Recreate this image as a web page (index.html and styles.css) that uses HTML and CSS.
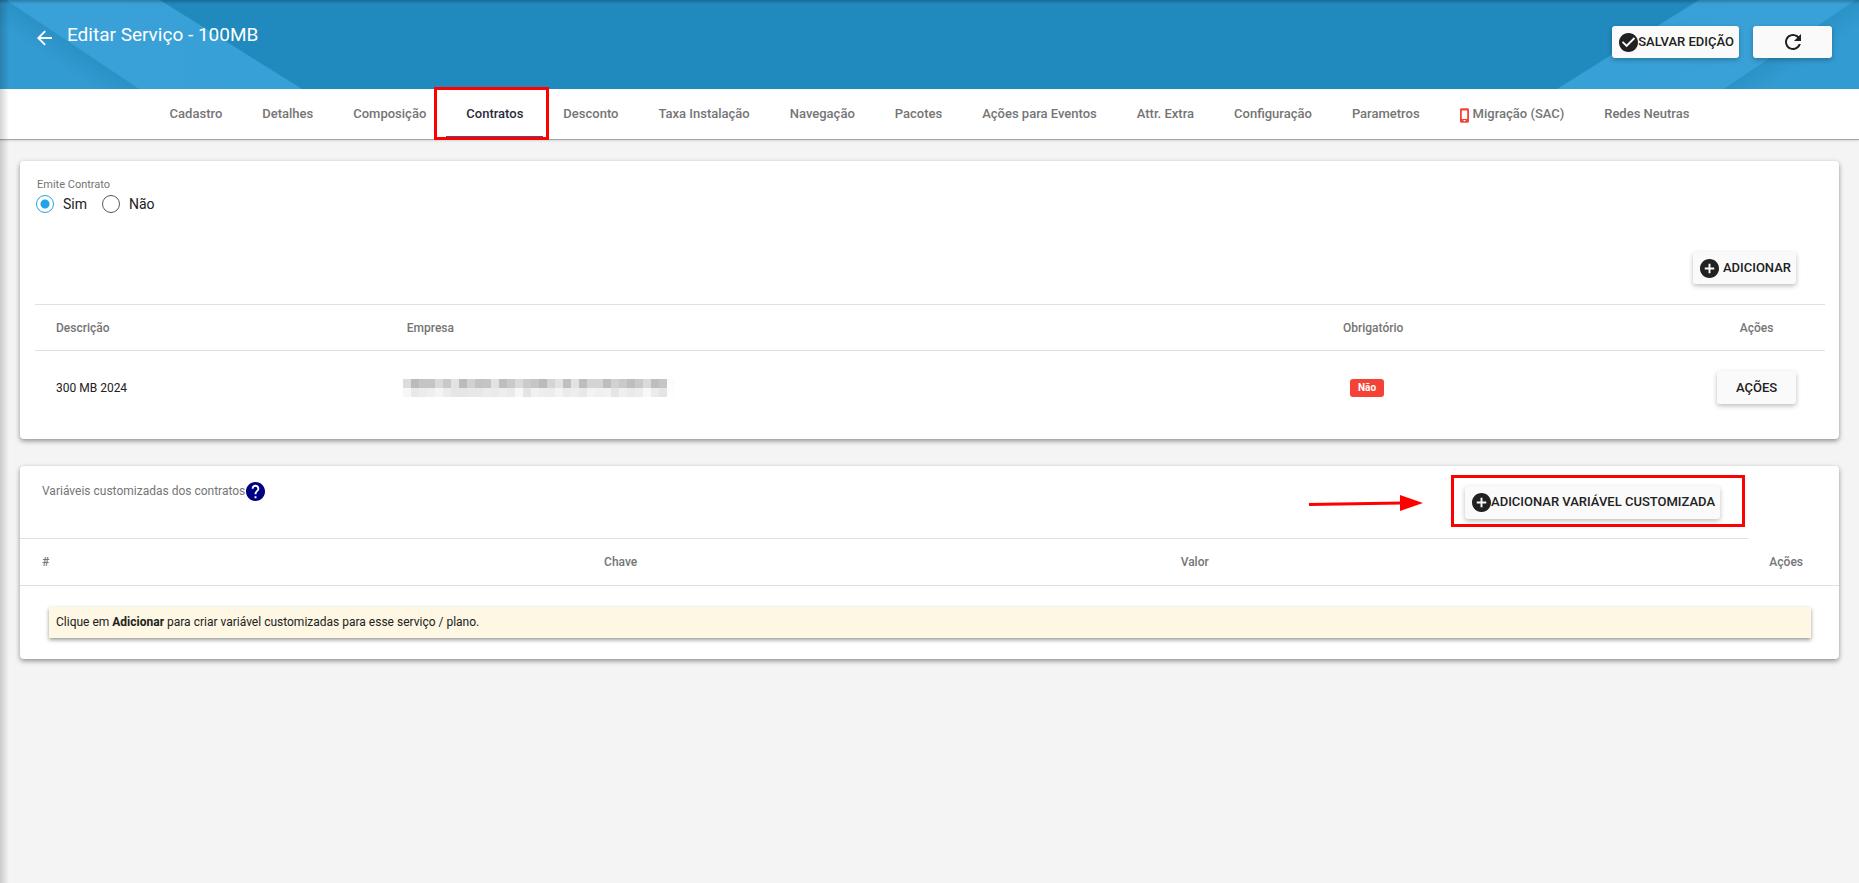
FILE: index.html
```html
<!DOCTYPE html>
<html lang="pt-BR">
<head>
<meta charset="utf-8">
<title>Editar Serviço - 100MB</title>
<link rel="stylesheet" href="styles.css">
</head>
<body>
<svg class="sprite" aria-hidden="true">
  <symbol id="plus" viewBox="2 2 20 20"><path d="M12 2C6.48 2 2 6.48 2 12s4.480 10 10 10 10-4.480 10-10S17.520 2 12 2zm5 11h-4v4h-2v-4H7v-2h4V7h2v4h4v2z"/></symbol>
</svg>
<header class="topbar">
  <svg class="topbar-art left" viewBox="0 0 302 89" aria-hidden="true">
    <defs>
      <linearGradient id="low" gradientUnits="userSpaceOnUse" x1="30" y1="80" x2="73" y2="16"><stop offset="0.35" stop-color="#329bd1"/><stop offset="1" stop-color="#2489bd"/></linearGradient>
      <linearGradient id="band" gradientUnits="userSpaceOnUse" x1="120" y1="0" x2="240" y2="0"><stop offset="0" stop-color="#39a1d7"/><stop offset="1" stop-color="#37a0d6"/></linearGradient>
    </defs>
    <path fill="url(#low)" d="M0 0H6L139 89H0z"/>
    <path fill="url(#band)" d="M6 0H160L302 89H139z"/>
  </svg>
  <svg class="topbar-art right" viewBox="0 0 302 89" aria-hidden="true">
    <g transform="matrix(-1 0 0 1 302 0)">
      <path fill="url(#low)" d="M0 0H3L135 89H0z"/>
      <path fill="url(#band)" d="M3 0H160L302 89H135z"/>
    </g>
  </svg>
  <button class="back" aria-label="Voltar"><svg viewBox="4 4 16 16"><path d="M20 11H7.830l5.590-5.590L12 4l-8 8 8 8 1.410-1.410L7.830 13H20v-2z"/></svg></button>
  <h1>Editar Serviço - 100MB</h1>
  <div class="topbar-actions">
    <button class="btn"><svg class="icon" viewBox="2 2 20 20"><path d="M12 2C6.480 2 2 6.480 2 12s4.480 10 10 10 10-4.480 10-10S17.520 2 12 2zm-2 15l-5-5 1.410-1.410L10 14.170l7.590-7.590L19 8l-9 9z"/></svg>SALVAR EDIÇÃO</button>
    <button class="btn btn-wide" aria-label="Recarregar"><svg class="icon-reload" viewBox="4 4 16 16"><path d="M17.650 6.350C16.200 4.900 14.210 4 12 4c-4.420 0-7.990 3.580-7.990 8s3.570 8 7.990 8c3.730 0 6.840-2.550 7.730-6h-2.080c-.820 2.330-3.040 4-5.650 4-3.310 0-6-2.690-6-6s2.690-6 6-6c1.660 0 3.140.690 4.220 1.780L13 11h7V4l-2.350 2.350z"/></svg></button>
  </div>
</header>
<nav class="tabs">
  <a href="#">Cadastro</a>
  <a href="#">Detalhes</a>
  <a href="#">Composição</a>
  <a href="#" class="active" aria-current="page">Contratos<span class="mark mark-tab"></span></a>
  <a href="#">Desconto</a>
  <a href="#">Taxa Instalação</a>
  <a href="#">Navegação</a>
  <a href="#">Pacotes</a>
  <a href="#">Ações para Eventos</a>
  <a href="#">Attr. Extra</a>
  <a href="#">Configuração</a>
  <a href="#">Parametros</a>
  <a href="#"><svg class="phone" viewBox="0 0 10 16"><path fill-rule="evenodd" d="M1.500 0H8.500Q10 0 10 1.500V14.500Q10 16 8.500 16H1.500Q0 16 0 14.500V1.500Q0 0 1.500 0zM2 2.500V12H8V2.500zM4 13V14.500H6V13z"/></svg>Migração (SAC)</a>
  <a href="#">Redes Neutras</a>
</nav>
<main>
  <section class="card contracts">
    <fieldset>
      <legend>Emite Contrato</legend>
      <label><input type="radio" name="emite" checked>Sim</label>
      <label><input type="radio" name="emite">Não</label>
    </fieldset>
    <div class="add-row"><button class="btn btn-gap"><svg class="icon"><use href="#plus"/></svg>ADICIONAR</button></div>
    <table>
      <colgroup><col class="c-desc"><col class="c-company"><col><col class="c-act"></colgroup>
      <thead><tr><th>Descrição</th><th>Empresa</th><th>Obrigatório</th><th class="center">Ações</th></tr></thead>
      <tbody><tr>
        <td>300 MB 2024</td>
        <td><svg class="mosaic" viewBox="0 0 272 18" shape-rendering="crispEdges" role="img" aria-label="Empresa oculta">
          <g id="tiles"></g></svg></td>
        <td><span class="badge">Não</span></td>
        <td class="center"><button class="btn btn-wide">AÇÕES</button></td>
      </tr></tbody>
    </table>
  </section>
  <section class="card variables">
    <div class="var-head">
      <h2>Variáveis customizadas dos contratos</h2>
      <button class="help" aria-label="Ajuda"><svg viewBox="2 2 20 20"><path d="M12 2C6.480 2 2 6.480 2 12s4.480 10 10 10 10-4.480 10-10S17.520 2 12 2zm1 17h-2v-2h2v2zm2.070-7.750l-.9.920C13.450 12.900 13 13.500 13 15h-2v-.5c0-1.100.450-2.100 1.170-2.830l1.240-1.260c.370-.360.590-.860.590-1.410 0-1.100-.9-2-2-2s-2 .9-2 2H8c0-2.210 1.790-4 4-4s4 1.790 4 4c0 .880-.360 1.680-.930 2.250z"/></svg></button>
      <div class="var-add">
        <svg class="arrow" viewBox="0 0 114 16" aria-hidden="true"><path d="M0 8L92 6.500V9.500L0 11z"/><path d="M91 0L114 8L91 16z"/></svg>
        <button class="btn"><svg class="icon"><use href="#plus"/></svg>ADICIONAR VARIÁVEL CUSTOMIZADA</button>
        <span class="mark mark-add"></span>
      </div>
    </div>
    <table>
      <colgroup><col class="v-num"><col class="v-key"><col><col class="v-act"></colgroup>
      <thead><tr><th>#</th><th>Chave</th><th>Valor</th><th class="end">Ações</th></tr></thead>
    </table>
    <p class="notice">Clique em <strong>Adicionar</strong> para criar variável customizadas para esse serviço / plano.</p>
  </section>
</main>
<div class="edge-shade"></div>
<script src="mosaic.js"></script>
</body>
</html>
```
FILE: styles.css
```css
* { box-sizing: border-box; }
body {
  margin: 0;
  min-height: 100vh;
  background: #f4f4f4;
  color: #212121;
  font: 12px/16px Roboto, sans-serif;
}
button { font: inherit; color: inherit; border: 0; padding: 0; background: none; cursor: pointer; }
svg { display: block; fill: currentColor; flex: none; }
.sprite { position: absolute; width: 0; height: 0; }

.topbar {
  position: relative;
  display: flex;
  align-items: flex-start;
  height: 89px;
  padding: 20px 27px 0 37px;
  background: #2089be;
  color: #fff;
}
.topbar::after {
  content: "";
  position: absolute;
  inset: 0 0 auto;
  height: 4px;
  background: linear-gradient(rgba(0, 0, 0, .22), transparent);
}
.topbar-art { position: absolute; top: 0; width: 302px; height: 89px; }
.topbar-art.left { left: 0; }
.topbar-art.right { right: 0; }
.back { position: relative; margin: 10px 15px 0 0; }
.back svg { width: 15px; height: 16px; }
h1 { position: relative; margin: 0; font-size: 19px; line-height: 30px; font-weight: 400; }
.topbar-actions { position: relative; display: flex; gap: 14px; margin: 6px 0 0 auto; }

.btn {
  display: inline-flex;
  align-items: center;
  justify-content: center;
  height: 32px;
  padding: 0 5px 0 7px;
  border-radius: 3px;
  background: #fafafa;
  color: #212121;
  font-size: 13px;
  font-weight: 500;
  white-space: nowrap;
  box-shadow: 0 2px 5px rgba(0, 0, 0, .26);
}
.btn-gap { gap: 4px; }
.btn-wide { width: 79px; padding: 0; }
.icon { width: 19px; height: 19px; }
.icon-reload { width: 16px; height: 16px; }

.tabs {
  display: flex;
  justify-content: center;
  height: 51px;
  background: #fff;
  border-bottom: 1px solid #a6a6a6;
  box-shadow: 0 1px 2px rgba(0, 0, 0, .12);
}
.tabs a {
  position: relative;
  display: flex;
  align-items: center;
  padding: 0 20px;
  color: #757575;
  font-size: 13px;
  font-weight: 500;
  text-decoration: none;
  white-space: nowrap;
}
.tabs .active { color: #2b2b3d; box-shadow: inset 0 -3px #5b4a86; }
.phone { width: 9px; height: 15px; margin: 3px 4px 0 0; fill: #f44336; }

.mark { position: absolute; border: 3px solid #f00; pointer-events: none; }
.mark-tab { inset: -2px -6px -1px -12px; }
.mark-add { inset: -11px -25px -8px -15px; }

main { display: flex; flex-direction: column; gap: 27px; padding: 21px 20px; }
.card {
  background: #fff;
  border-radius: 4px;
  box-shadow: 0 2px 5px rgba(0, 0, 0, .42);
}
.contracts { padding: 16px 14px 14px 15px; }
fieldset { display: flex; gap: 15px; margin: 0; padding: 2px 0 0 1px; border: 0; }
legend { padding: 0 0 0 1px; color: #757575; font-size: 11px; line-height: 16px; }
label { display: flex; align-items: center; gap: 9px; font-size: 14px; line-height: 18px; }
input[type="radio"] {
  appearance: none;
  width: 18px;
  height: 18px;
  margin: 0;
  border: 1px solid #5a5a5a;
  border-radius: 50%;
}
input[type="radio"]:checked {
  border-color: #22a3e6;
  background: radial-gradient(circle, #22a3e6 4px, transparent 5px);
}
.add-row { display: flex; justify-content: flex-end; padding: 39px 29px 20px 0; }

table { width: 100%; border-collapse: collapse; table-layout: fixed; }
th { padding: 0 21px; color: #757575; font-weight: 500; text-align: left; }
td { padding: 0 21px; height: 74px; }
.center { padding: 0; text-align: center; }
.contracts th { height: 46px; border-top: 1px solid #e0e0e0; border-bottom: 1px solid #e0e0e0; }
.c-desc { width: 19.6%; }
.c-company { width: 52.3%; }
.c-act { width: 137px; }
.contracts td .btn { height: 33px; }
.mosaic { width: 272px; height: 18px; margin-left: -4px; }
.badge {
  display: inline-block;
  margin-left: 7px;
  padding: 0 8px;
  border-radius: 3px;
  background: #f44336;
  color: #fff;
  font-size: 10px;
  line-height: 18px;
  font-weight: 700;
}

.var-head {
  display: flex;
  align-items: flex-start;
  width: 95%;
  height: 73px;
  padding: 16px 28px 0 22px;
  border-bottom: 1px solid #e0e0e0;
}
h2 { margin: 0; color: #757575; font-size: 12px; line-height: 18px; font-weight: 400; }
.help { margin-left: 1px; color: #000080; }
.help svg { width: 19px; height: 19px; }
.var-add { position: relative; display: flex; margin: 4px 0 0 auto; }
.var-add .btn { height: 33px; }
.arrow { width: 114px; height: 16px; margin: 9px 42px 0 0; fill: #f00; }
.mark-add { left: 142px; }
.variables th { height: 47px; padding: 0 22px; border-bottom: 1px solid #e0e0e0; }
.v-num { width: 30.9%; }
.v-key { width: 31.7%; }
.v-act { width: 137px; }
.variables .end { padding-right: 36px; text-align: right; }
.variables { padding-bottom: 21px; }
.notice {
  margin: 21px 28px 0 29px;
  padding: 8px 7px;
  background: #fdf7e3;
  box-shadow: 0 2px 4px rgba(0, 0, 0, .4);
  line-height: 15px;
}
.edge-shade {
  position: fixed;
  inset: 0 auto 0 0;
  width: 9px;
  background: linear-gradient(90deg, rgba(0, 0, 0, .17), transparent);
  pointer-events: none;
}
```
FILE: mosaic.js
```js
// Grey levels of the pixelated company name, one row of tiles per list.
const rows = [
  [220, 187, 197, 197, 218, 201, 226, 187, 209, 195, 197, 226, 190, 201, 218, 203, 197, 187, 212, 226, 192, 226, 190, 212, 212, 190, 209, 201, 190, 201, 218, 190, 197, 252],
  [247, 232, 236, 239, 245, 236, 230, 230, 232, 232, 236, 234, 238, 234, 247, 228, 241, 237, 236, 243, 235, 238, 232, 243, 240, 242, 229, 239, 234, 237, 248, 235, 228, 253]
];
const group = document.getElementById("tiles");
rows.forEach((row, y) => row.forEach((level, x) => {
  const tile = document.createElementNS("http://www.w3.org/2000/svg", "rect");
  tile.setAttribute("x", x * 8);
  tile.setAttribute("y", y * 9);
  tile.setAttribute("width", 8);
  tile.setAttribute("height", 9);
  tile.setAttribute("fill", `rgb(${level},${level},${level})`);
  group.append(tile);
}));
```
